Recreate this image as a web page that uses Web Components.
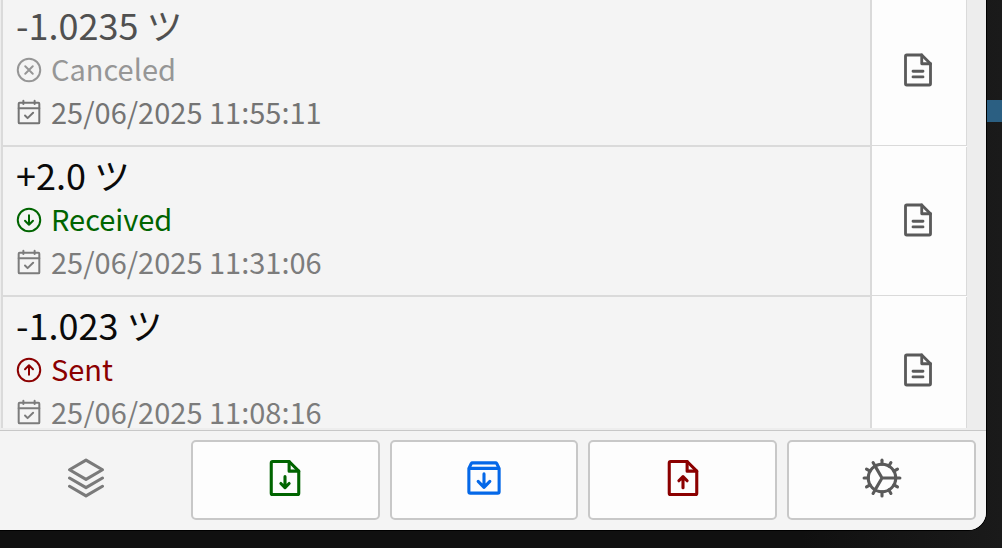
<!DOCTYPE html>
<html lang="en">
<head>
<meta charset="utf-8">
<title>Wallet</title>
<style>
    body {
        margin: 0;
        font-family: "Noto Sans CJK JP", "Noto Sans", sans-serif;
        background: linear-gradient(90deg, #101010 80%, #1a1a1a);
    }
</style>
</head>
<body>
<wallet-window>
    <tx-item amount="-1.0235" status="canceled" date="25/06/2025 11:55:11">Canceled</tx-item>
    <tx-item amount="+2.0" status="received" date="25/06/2025 11:31:06">Received</tx-item>
    <tx-item amount="-1.023" status="sent" date="25/06/2025 11:08:16">Sent</tx-item>
    <tab-bar slot="tabs">
        <tab-button icon="stack" label="Wallets" active></tab-button>
        <tab-button icon="fileDown" label="Receive"></tab-button>
        <tab-button icon="box" label="Messages"></tab-button>
        <tab-button icon="fileUp" label="Send"></tab-button>
        <tab-button icon="gear" label="Settings"></tab-button>
    </tab-bar>
</wallet-window>

<script>
const page = `<path d="M200,224H56a8,8,0,0,1-8-8V40a8,8,0,0,1,8-8h96l56,56V216A8,8,0,0,1,200,224Z"/><path d="M152,32V88H208"/>`;

// twelve teeth around the gear wheel
let teeth = "";
for (let i = 0; i < 12; i++) {
    teeth += `<path d="M208,128h24" transform="rotate(${i * 30} 128 128)"/>`;
}

const icons = {
    file: `${page}<path d="M96,136H160M96,172H160"/>`,
    fileDown: `${page}<path d="M128,120V184M104,160L128,184L152,160"/>`,
    fileUp: `${page}<path d="M128,184V120M104,144L128,120L152,144"/>`,
    box: `<path d="M216,72V208a8,8,0,0,1-8,8H48a8,8,0,0,1-8-8V72L54,44a8,8,0,0,1,7-4H195a8,8,0,0,1,7,4ZM40,72H216"/><path d="M128,104V182M94,148L128,182L162,148"/>`,
    stack: `<path d="M32,80L128,136L224,80L128,24Z"/><path d="M32,128L128,184L224,128M32,176L128,232L224,176"/>`,
    gear: `<circle cx="128" cy="128" r="80"/><path d="M208,128H128L88,59M128,128L88,197"/>${teeth}`,
    canceled: `<circle cx="128" cy="128" r="96"/><path d="M160,96L96,160M160,160L96,96"/>`,
    received: `<circle cx="128" cy="128" r="96"/><path d="M128,88V168M94,134L128,168L162,134"/>`,
    sent: `<circle cx="128" cy="128" r="96"/><path d="M128,168V88M94,122L128,88L162,122"/>`,
    calendar: `<rect x="40" y="40" width="176" height="176" rx="8"/><path d="M80,24V52M176,24V52M40,88H216M94,150L116,172L163,126"/>`
};

class SvgIcon extends HTMLElement {
    constructor () {
        super();
        this.attachShadow({mode: "open"});
    }

    connectedCallback () {
        this.shadowRoot.innerHTML = `
        <style>
            :host {
                display: block;
                flex: none;
                width: var(--icon-size, 30px);
                height: var(--icon-size, 30px);
            }
            svg {
                display: block;
                width: 100%;
                height: 100%;
                fill: none;
                stroke: currentColor;
                stroke-width: var(--icon-stroke, 17);
                stroke-linecap: round;
                stroke-linejoin: round;
            }
        </style>
        <svg viewBox="0 0 256 256" aria-hidden="true">${icons[this.getAttribute("name")]}</svg>`;
    }
}

class TxItem extends HTMLElement {
    constructor () {
        super();
        this.attachShadow({mode: "open"});
    }

    connectedCallback () {
        const status = this.getAttribute("status");
        this.shadowRoot.innerHTML = `
        <style>
            :host {
                display: flex;
                box-sizing: border-box;
                height: 150px;
                color: #0a0a0a;
                --status: #969696;
                --date: #7c7c7c;
            }
            :host([status="canceled"]) { color: #505050; --date: #747474; }
            :host([status="received"]) { --status: #006400; }
            :host([status="sent"]) { --status: #8b0000; }
            .info {
                flex: 1;
                padding: 5px 11px 0;
                background: #f4f4f4;
                border: 2px solid #dadada;
                border-top: 0;
            }
            .amount {
                padding-left: 2px;
                font-size: 36px;
                line-height: 44px;
            }
            .line {
                display: flex;
                align-items: center;
                gap: 7px;
                font-size: 29px;
                line-height: 44px;
                color: var(--status);
            }
            .date {
                line-height: 42px;
                color: var(--date);
            }
            svg-icon { margin-top: 4px; }
            button {
                width: 95px;
                padding: 0 2px 6px 0;
                display: flex;
                align-items: center;
                justify-content: center;
                color: #5a5a5a;
                background: #fdfdfd;
                border: 1px solid #dadada;
                border-width: 0 1px 1px 0;
                margin-bottom: 1px;
                box-shadow: 0 1px #fdfdfd;
                --icon-size: 40px;
                --icon-stroke: 18;
            }
        </style>
        <div class="info">
            <div class="amount">${this.getAttribute("amount")} ツ</div>
            <div class="line"><svg-icon name="${status}"></svg-icon><slot></slot></div>
            <div class="line date"><svg-icon name="calendar"></svg-icon><time>${this.getAttribute("date")}</time></div>
        </div>
        <button aria-label="Details"><svg-icon name="file"></svg-icon></button>`;
    }
}

class TabButton extends HTMLElement {
    constructor () {
        super();
        this.attachShadow({mode: "open"});
    }

    connectedCallback () {
        this.shadowRoot.innerHTML = `
        <style>
            :host {
                display: block;
                color: #5a5a5a;
                --icon-size: 44px;
                --icon-stroke: 18;
            }
            :host([icon="fileDown"]) { color: #006400; }
            :host([icon="box"]) { color: #0568e8; }
            :host([icon="fileUp"]) { color: #8b0000; }
            button {
                display: flex;
                align-items: center;
                justify-content: center;
                box-sizing: border-box;
                width: 100%;
                height: 80px;
                padding: 0 0 5px;
                color: inherit;
                background: #fdfdfd;
                border: 2px solid #c8c8c8;
                border-radius: 5px;
            }
            :host([active]) button {
                color: #7a7a7a;
                background: none;
                border-color: transparent;
            }
        </style>
        <button aria-label="${this.getAttribute("label")}"><svg-icon name="${this.getAttribute("icon")}"></svg-icon></button>`;
    }
}

class TabBar extends HTMLElement {
    constructor () {
        super();
        this.attachShadow({mode: "open"});
        this.shadowRoot.innerHTML = `
        <style>
            :host {
                display: block;
                background: #f4f4f4;
                border-top: 1px solid #c8c8c8;
            }
            nav {
                display: grid;
                grid-template-columns: repeat(5, 1fr);
                gap: 10px;
                margin-left: -8px;
                padding: 9px 10px 10px 0;
            }
        </style>
        <nav><slot></slot></nav>`;
    }
}

class WalletWindow extends HTMLElement {
    constructor () {
        super();
        this.attachShadow({mode: "open"});
        this.shadowRoot.innerHTML = `
        <style>
            :host {
                display: flex;
                box-sizing: border-box;
                height: 100vh;
                padding-bottom: 18px;
            }
            .window {
                flex: 1;
                min-width: 0;
                display: flex;
                flex-direction: column;
                overflow: hidden;
                background: #ededed;
                border-radius: 0 0 18px 0;
                box-shadow: 0 0 0 1px #000;
            }
            .list {
                flex: 1;
                min-height: 0;
                overflow: hidden;
                margin: 0 19px 2px 1px;
            }
            /* the list is scrolled a little past the first row's top */
            .rows { margin-top: -3px; }
            .desktop {
                width: 16px;
                padding-top: 100px;
            }
            .stripe {
                height: 22px;
                margin-left: 1px;
                background: #2b5f82;
            }
        </style>
        <div class="window">
            <div class="list"><div class="rows"><slot></slot></div></div>
            <slot name="tabs"></slot>
        </div>
        <div class="desktop"><div class="stripe"></div></div>`;
    }
}

customElements.define("svg-icon", SvgIcon);
customElements.define("tx-item", TxItem);
customElements.define("tab-button", TabButton);
customElements.define("tab-bar", TabBar);
customElements.define("wallet-window", WalletWindow);
</script>
</body>
</html>
